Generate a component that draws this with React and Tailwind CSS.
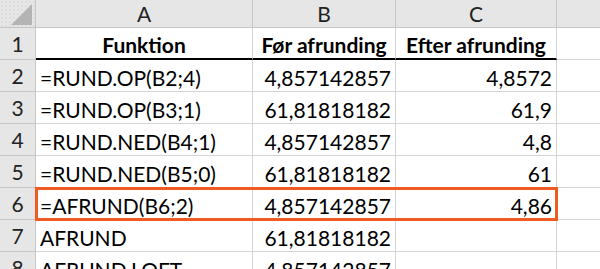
import React from "react";

const rows = [
  { n: 1, a: "Funktion", b: "Før afrunding", c: "Efter afrunding", head: true },
  { n: 2, a: "=RUND.OP(B2;4)", b: "4,857142857", c: "4,8572" },
  { n: 3, a: "=RUND.OP(B3;1)", b: "61,81818182", c: "61,9" },
  { n: 4, a: "=RUND.NED(B4;1)", b: "4,857142857", c: "4,8" },
  { n: 5, a: "=RUND.NED(B5;0)", b: "61,81818182", c: "61" },
  { n: 6, a: "=AFRUND(B6;2)", b: "4,857142857", c: "4,86", mark: true },
  { n: 7, a: "AFRUND", b: "61,81818182", c: "" },
  { n: 8, a: "AFRUND.LOFT", b: "4,857142857", c: "" },
];

const dots =
  "bg-[radial-gradient(circle,#cfcfcf_0.6px,transparent_0.8px)] bg-[length:4px_4px]";

function HeaderCell({ children, className = "" }) {
  return (
    <div
      className={`h-[28px] shrink-0 flex items-center justify-center bg-[#e6e6e6] border-r border-b border-[#c6c6c6] text-[21px] text-[#222] ${className}`}
    >
      {children}
    </div>
  );
}

function Cells({ row }) {
  const line = row.head ? "border-b-2 border-b-black" : "border-b border-b-[#d4d4d4]";
  return (
    <>
      <div
        className={`w-[217px] shrink-0 h-full flex items-end pb-[3px] px-[4px] border-r border-r-[#d4d4d4] ${line} ${
          row.head ? "justify-center font-bold" : ""
        }`}
      >
        {row.a}
      </div>
      <div
        className={`w-[143px] shrink-0 h-full flex items-end pb-[3px] px-[4px] border-r border-r-[#d4d4d4] ${line} ${
          row.head ? "justify-center font-bold" : "justify-end"
        }`}
      >
        {row.b}
      </div>
      <div
        className={`w-[161px] shrink-0 h-full flex items-end pb-[3px] px-[4px] border-r border-r-[#d4d4d4] ${line} ${
          row.head ? "justify-center font-bold" : "justify-end"
        }`}
      >
        {row.c}
      </div>
    </>
  );
}

export default function App() {
  return (
    <div className="w-[600px] h-[269px] overflow-hidden bg-white font-['Lato',sans-serif] text-[21px] text-black leading-none">
      <div className="flex">
        <HeaderCell className={`w-[36px] relative ${dots}`}>
          <svg width="36" height="28" className="absolute inset-0">
            <polygon points="32,4 32,25 11,25" fill="#b4b4b4" />
          </svg>
        </HeaderCell>
        <HeaderCell className="w-[217px]">A</HeaderCell>
        <HeaderCell className="w-[143px]">B</HeaderCell>
        <HeaderCell className="w-[161px]">C</HeaderCell>
        <HeaderCell className="flex-1 border-r-0" />
      </div>
      {rows.map((row) => (
        <div key={row.n} className="flex h-[32px]">
          <div className="w-[36px] shrink-0 h-full flex items-center justify-center bg-[#e6e6e6] border-r border-b border-[#c6c6c6] text-[#222]">
            {row.n}
          </div>
          {row.mark ? (
            <div className="relative flex h-full">
              <Cells row={row} />
              <div className="absolute left-[-1px] top-[-1px] w-[523px] h-[34px] border-[3px] border-[#f15a22]" />
            </div>
          ) : (
            <Cells row={row} />
          )}
          <div className="flex-1 h-full border-b border-[#d4d4d4]" />
        </div>
      ))}
    </div>
  );
}
